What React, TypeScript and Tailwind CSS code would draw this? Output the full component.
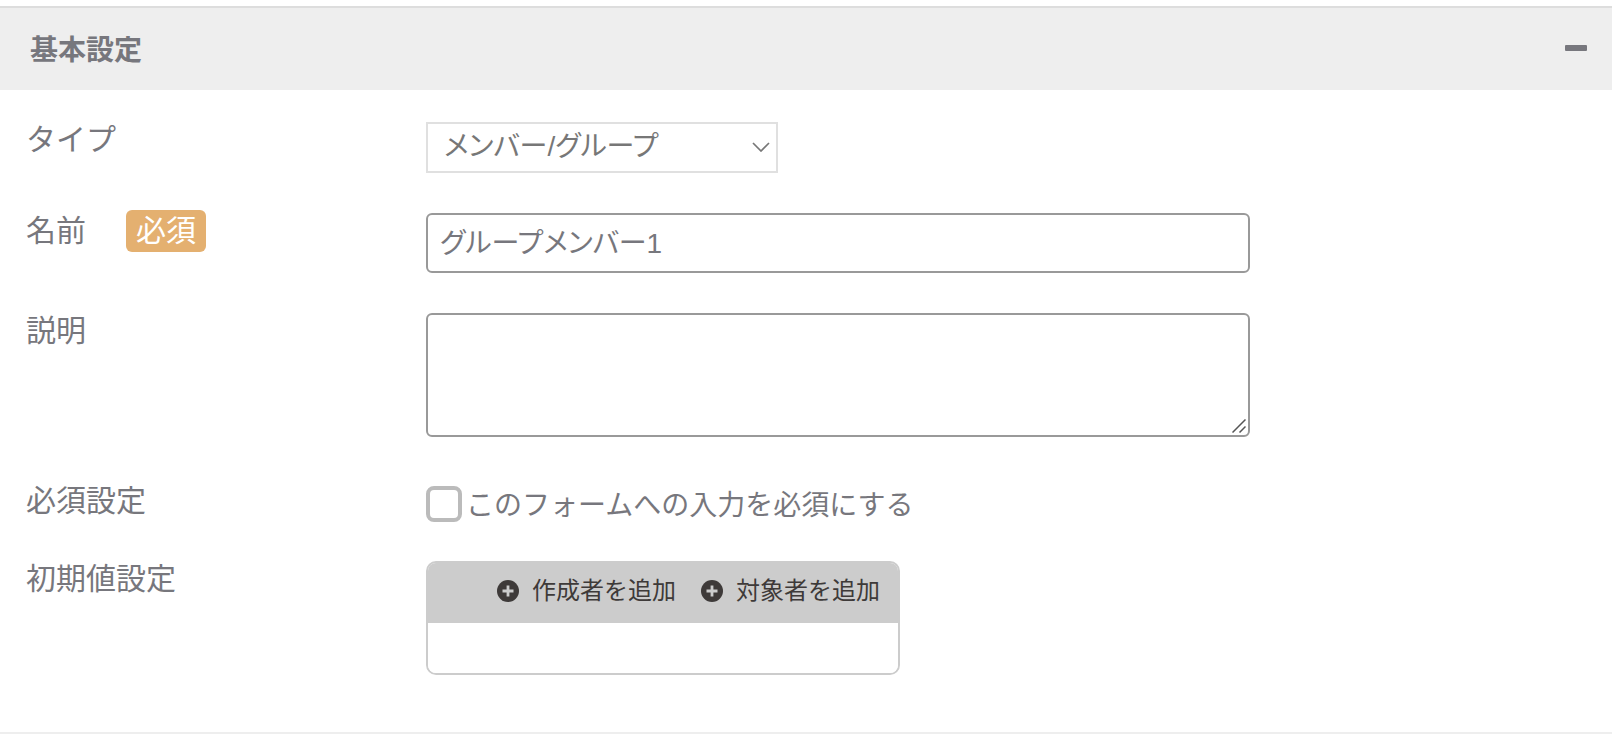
import React, { useState } from "react";

const PlusIcon = () => (
  <svg viewBox="0 0 24 24" className="h-6 w-6 flex-shrink-0" aria-hidden="true">
    <circle cx="12" cy="12" r="11" fill="#3e3a39" />
    <path d="M12 6.5v11M6.5 12h11" stroke="#cccccc" strokeWidth="2.8" />
  </svg>
);

type FieldProps = {
  label: string;
  htmlFor?: string;
  required?: boolean;
  children: React.ReactNode;
};

const Field = ({ label, htmlFor, required, children }: FieldProps) => (
  <div className="flex items-start">
    <div className="flex h-9 w-[400px] flex-shrink-0 items-center gap-10 text-[30px] leading-9">
      {htmlFor ? <label htmlFor={htmlFor}>{label}</label> : <span>{label}</span>}
      {required && (
        <span className="rounded-md bg-[#e4b070] px-[10px] leading-[42px] text-white">必須</span>
      )}
    </div>
    <div className="min-w-0 flex-1">{children}</div>
  </div>
);

const App = () => {
  const [open, setOpen] = useState(true);
  const [type, setType] = useState("member");
  const [name, setName] = useState("グループメンバー1");
  const [description, setDescription] = useState("");
  const [required, setRequired] = useState(false);

  return (
    <main className="bg-white pt-[6px] font-['Liberation_Sans','Noto_Sans_CJK_JP',sans-serif] text-[#77777d]">
      <section className="border-b-2 border-[#eeeeee]">
        <header className="flex h-[84px] items-center justify-between border-t-2 border-[#dddddd] bg-[#eeeeee] pr-[25px] pl-[30px]">
          <h2 className="pt-1 text-[28px] leading-9 font-bold">基本設定</h2>
          <button
            type="button"
            aria-label="基本設定を折りたたむ"
            aria-expanded={open}
            onClick={() => setOpen(!open)}
            className="flex h-9 items-center pb-[2px]"
          >
            <span className="h-[6px] w-[22px] rounded-[1px] bg-[#77777d]" />
          </button>
        </header>

        {open && (
          <form className="flex flex-col gap-10 px-[26px] pt-8 pb-[57px]">
            <Field label="タイプ" htmlFor="type">
              <div className="relative w-[352px] max-w-full">
                <select
                  id="type"
                  value={type}
                  onChange={e => setType(e.target.value)}
                  className="block h-[51px] w-full appearance-none border-2 border-[#e0e0e0] bg-white pr-10 pb-[2px] pl-4 text-[28px] text-[#777777] [font-feature-settings:'palt']"
                >
                  <option value="member">メンバー/グループ</option>
                </select>
                <svg
                  viewBox="0 0 18 10"
                  className="pointer-events-none absolute top-5 right-2 h-[10px] w-[18px]"
                  aria-hidden="true"
                >
                  <path d="M1 1l8 8 8-8" fill="none" stroke="#777777" strokeWidth="1.7" />
                </svg>
              </div>
            </Field>

            <Field label="名前" htmlFor="name" required>
              <input
                id="name"
                type="text"
                value={name}
                onChange={e => setName(e.target.value)}
                className="block h-[60px] w-[824px] max-w-full rounded-md border-2 border-[#999999] px-3 pb-1 text-[28px] [font-feature-settings:'palt']"
              />
            </Field>

            <Field label="説明" htmlFor="description">
              <div className="relative w-[824px] max-w-full">
                <textarea
                  id="description"
                  value={description}
                  onChange={e => setDescription(e.target.value)}
                  className="block h-[124px] w-full resize-y rounded-md border-2 border-[#999999] px-3 py-2 text-[28px] [&::-webkit-resizer]:bg-transparent"
                />
                <svg
                  viewBox="0 0 14 14"
                  className="pointer-events-none absolute right-1 bottom-1 h-[14px] w-[14px]"
                  aria-hidden="true"
                >
                  <path d="M0.5 13.5l13-13M7.5 13.5l6-6" stroke="#555555" strokeWidth="1.5" />
                </svg>
              </div>
            </Field>

            <div className="mt-[6px] -mb-px">
              <Field label="必須設定">
                <label className="flex items-center gap-1 pt-[3px] text-[28px] leading-9">
                  <input
                    type="checkbox"
                    checked={required}
                    onChange={e => setRequired(e.target.checked)}
                    className="h-9 w-9 flex-shrink-0 appearance-none rounded-lg border-4 border-[#bbbbbb] bg-white checked:bg-[#77777d]"
                  />
                  <span className="h-9 leading-10">このフォームへの入力を必須にする</span>
                </label>
              </Field>
            </div>

            <Field label="初期値設定">
              <div className="w-[474px] max-w-full overflow-hidden rounded-[10px] border-2 border-[#cccccc]">
                <div className="flex h-[60px] items-center justify-end gap-6 bg-[#cccccc] pr-[18px] pb-1 text-2xl leading-9 text-[#3e3a39]">
                  <button type="button" className="flex items-center gap-3">
                    <PlusIcon />
                    作成者を追加
                  </button>
                  <button type="button" className="flex items-center gap-3">
                    <PlusIcon />
                    対象者を追加
                  </button>
                </div>
                <div className="h-[50px] bg-white" />
              </div>
            </Field>
          </form>
        )}
      </section>
    </main>
  );
};

export default App;
